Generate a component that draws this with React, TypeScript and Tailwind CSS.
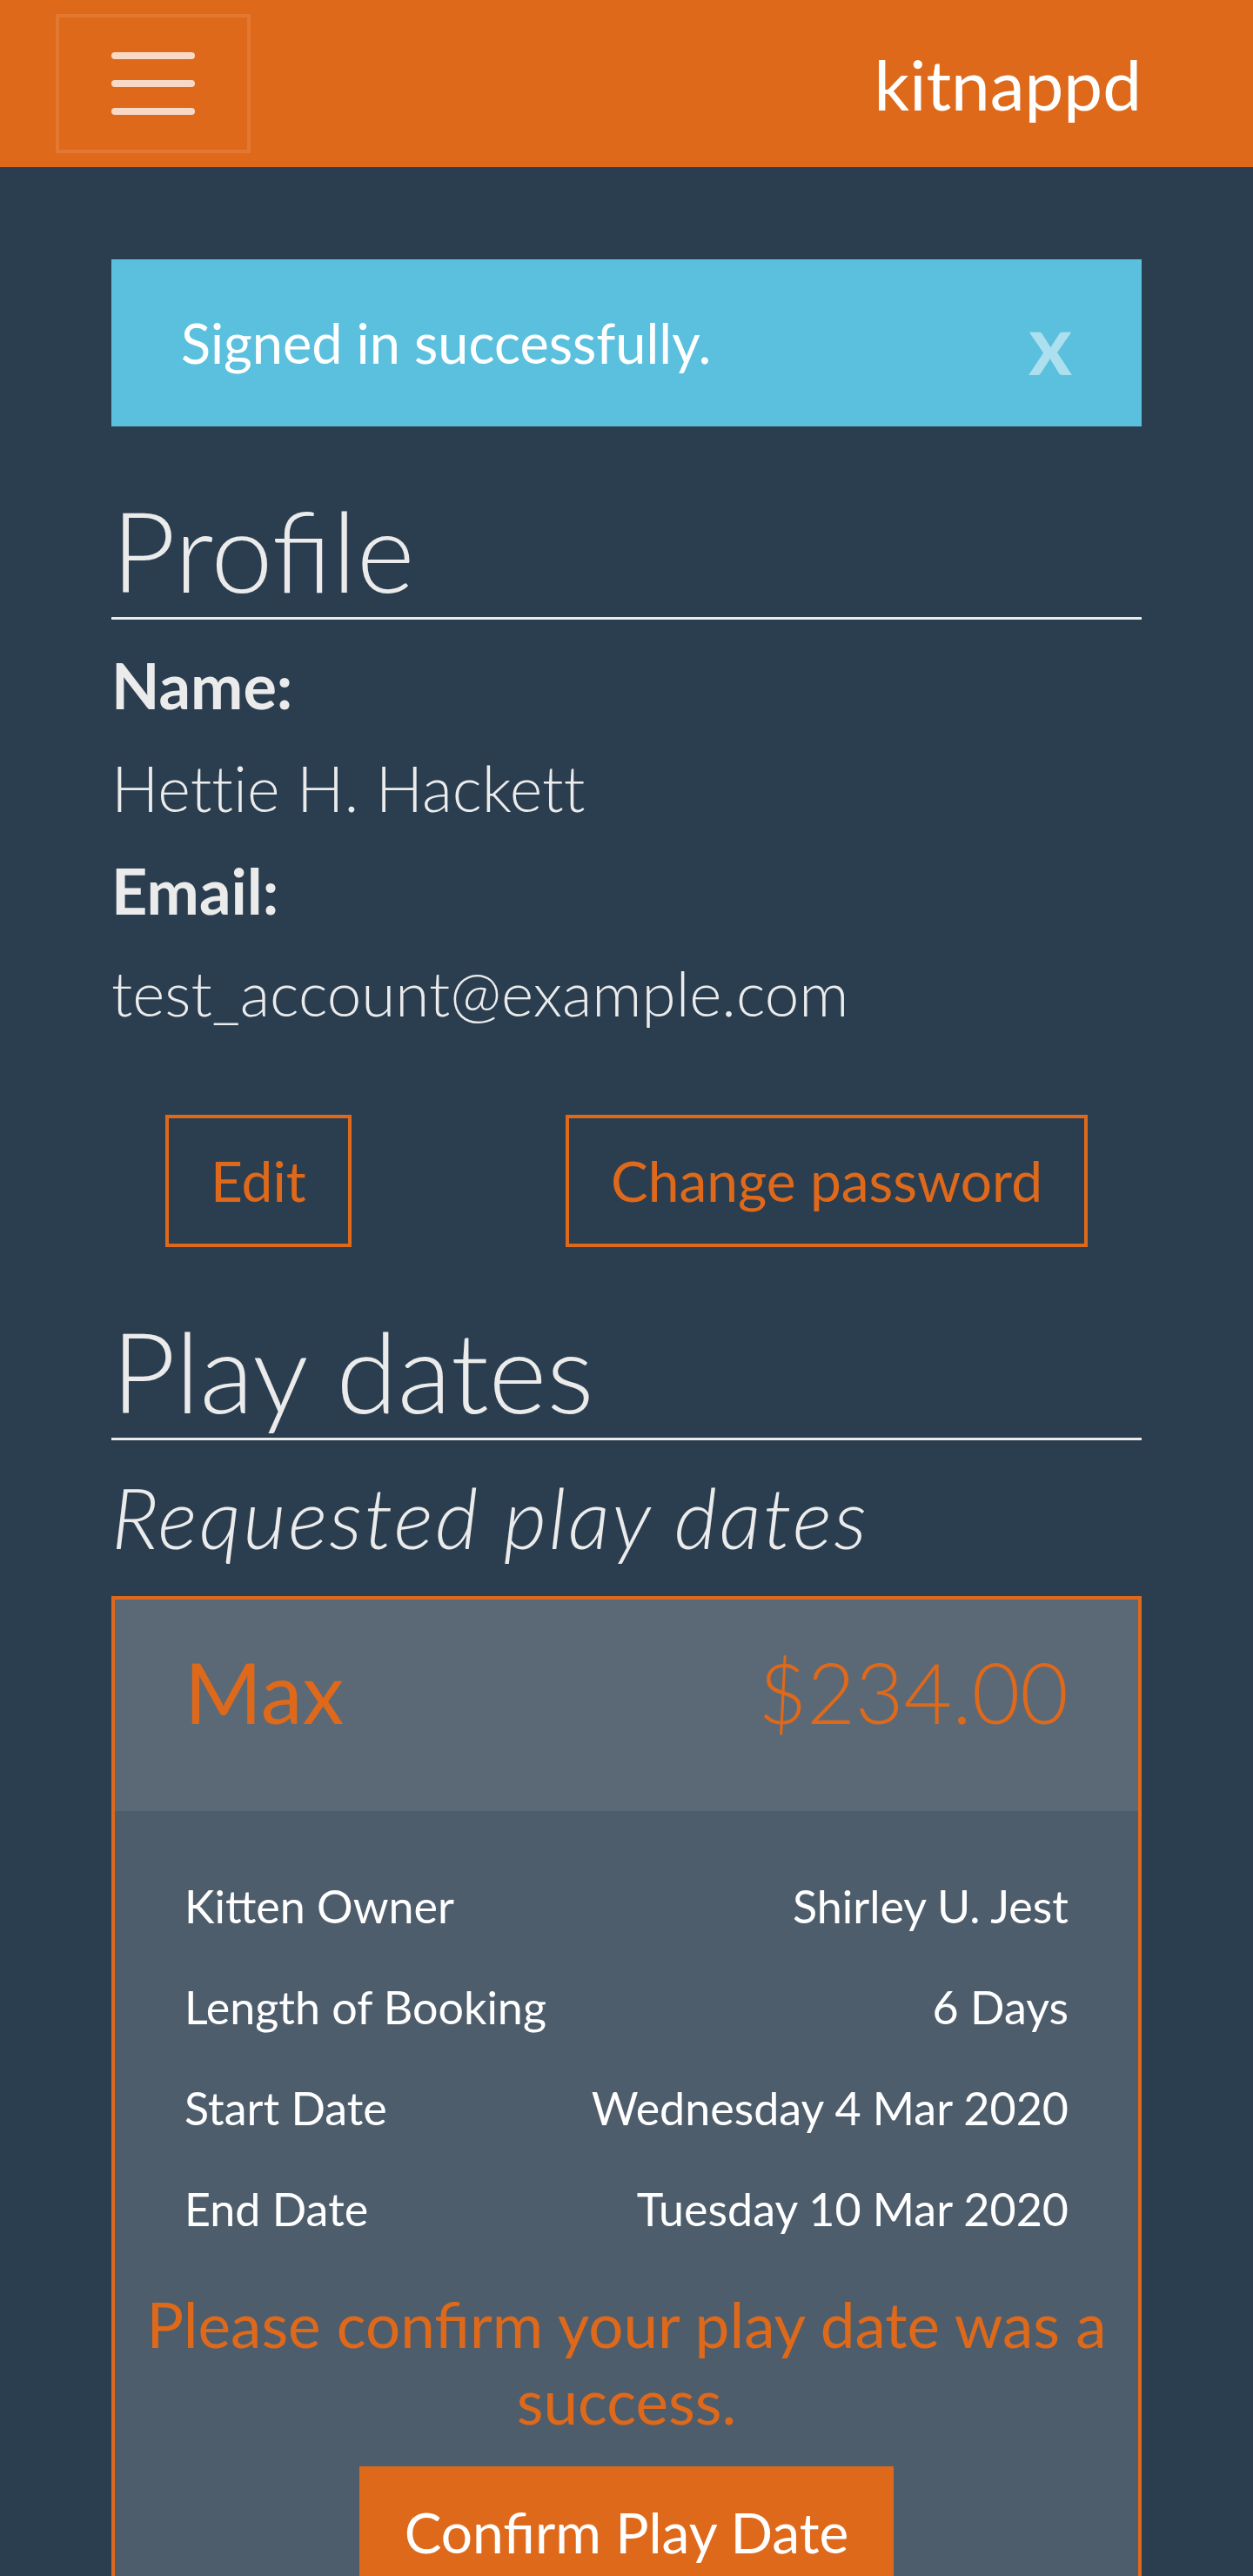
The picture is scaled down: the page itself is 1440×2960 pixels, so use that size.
import React from "react";

const details = [
  { label: "Kitten Owner", value: "Shirley U. Jest" },
  { label: "Length of Booking", value: "6 Days" },
  { label: "Start Date", value: "Wednesday 4 Mar 2020" },
  { label: "End Date", value: "Tuesday 10 Mar 2020" },
];

function Navbar() {
  return (
    <nav className="h-[192px] bg-[#df691a] flex items-center justify-between pl-[64px] pr-[128px]">
      <button className="w-[224px] h-[160px] border-[4px] border-white/10 flex flex-col items-center justify-center gap-6">
        <span className="block w-24 h-2 rounded-full bg-white/75"></span>
        <span className="block w-24 h-2 rounded-full bg-white/75"></span>
        <span className="block w-24 h-2 rounded-full bg-white/75"></span>
      </button>
      <span className="text-[80px] leading-[1.5] text-white">kitnappd</span>
    </nav>
  );
}

function Heading({ children }: { children: React.ReactNode }) {
  return (
    <h1 className="text-[128px] leading-[154px] font-light text-[#ebebeb] border-b-[3px] border-[#ebebeb]">
      {children}
    </h1>
  );
}

export default function App() {
  return (
    <div
      className="min-h-screen bg-[#2b3e50] text-[#ebebeb]"
      style={{ fontFamily: "Lato, 'Noto Sans', sans-serif" }}
    >
      <Navbar />

      <main className="px-[128px] pt-[106px]">
        <div className="relative bg-[#5bc0de] h-[192px] px-[80px] py-[48px]">
          <p className="text-[63px] leading-[96px] text-white">Signed in successfully.</p>
          <button className="absolute top-0 right-0 px-[80px] pt-[48px] text-[96px] leading-none font-bold text-white/50">
            x
          </button>
        </div>

        <section className="mt-[65px]">
          <Heading>Profile</Heading>
          <div className="mt-4 text-[72px] leading-[118px]">
            <p className="font-bold">Name:</p>
            <p className="font-light [font-variant-ligatures:no-common-ligatures]">Hettie H. Hackett</p>
            <p className="font-bold">Email:</p>
            <p className="font-light text-[71px]">test_account@example.com</p>
          </div>
          <div className="mt-[81px] flex justify-between px-[62px]">
            <button className="border-[4px] border-[#df691a] text-[#df691a] text-[64px] leading-[96px] px-[48px] py-[24px]">
              Edit
            </button>
            <button className="border-[4px] border-[#df691a] text-[#df691a] text-[64px] leading-[96px] px-[48px] py-[24px]">
              Change password
            </button>
          </div>
        </section>

        <section className="mt-[65px]">
          <Heading>Play dates</Heading>
          <h4 className="mt-[30px] text-[96px] leading-[1.2] font-light italic tracking-[2.4px] text-[#ebebeb]">
            Requested play dates
          </h4>

          <div className="mt-[34px] border-[4px] border-[#df691a] bg-[#4e5d6c]">
            <div className="bg-[#5b6977] px-[80px] pt-[48px] pb-[48px]">
              <div className="flex justify-between items-baseline mb-[32px] text-[96px] leading-[1.2] text-[#df691a]">
                <span>Max</span>
                <span className="font-light">$234.00</span>
              </div>
            </div>
            <div className="pt-[51px] pb-[40px]">
              <div className="px-[80px]">
                {details.map((row) => (
                  <div
                    key={row.label}
                    className="flex justify-between text-[52px] leading-[116px] text-white"
                  >
                    <span>{row.label}</span>
                    <span>{row.value}</span>
                  </div>
                ))}
              </div>
              <p className="mt-[31px] px-[20px] text-center text-[71px] leading-[88px] text-[#df691a]">
                Please confirm your play date was a success.
              </p>
              <div className="mt-[31px] flex justify-center">
                <button className="bg-[#df691a] border-[4px] border-[#df691a] text-white text-[64px] leading-[96px] px-[48px] py-[24px]">
                  Confirm Play Date
                </button>
              </div>
            </div>
          </div>
        </section>
      </main>
    </div>
  );
}
